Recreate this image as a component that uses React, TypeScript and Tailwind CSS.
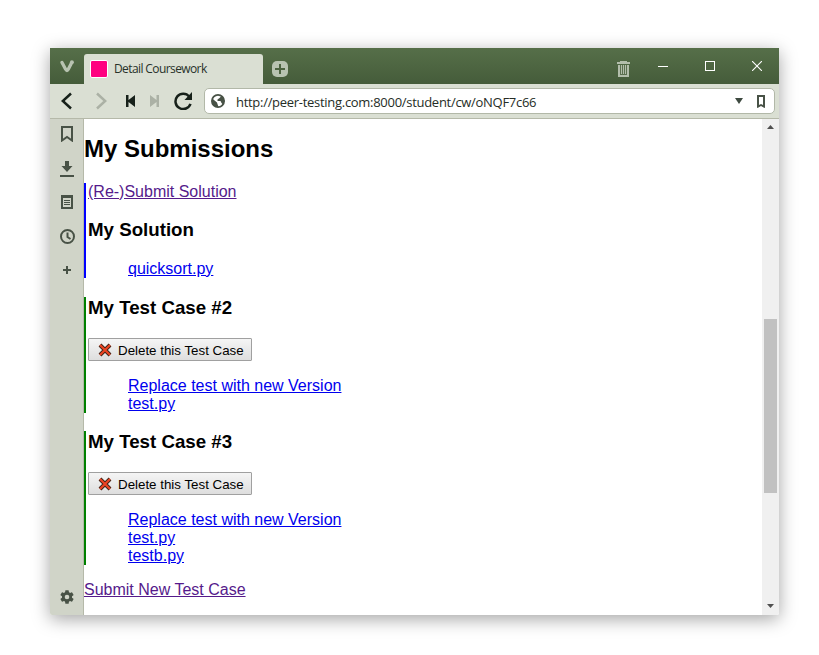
import type { ReactNode } from 'react';

function Glyph({ w, h, className = '', children }: { w: number; h: number; className?: string; children: ReactNode }) {
  return (
    <svg width={w} height={h} viewBox={`0 0 ${w} ${h}`} fill="none" className={`block shrink-0 ${className}`}>
      {children}
    </svg>
  );
}

function TitleBar() {
  return (
    <header className="flex h-9 shrink-0 items-start bg-linear-to-b from-[#566f49] to-[#455c3a]">
      <Glyph w={14} h={13} className="mt-3 ml-2.5">
        <path d="M2 2.500L5.600 9.300Q7 11.800 8.300 9.300L11 4" stroke="#b8c3b1" strokeWidth="3.300" strokeLinecap="round" strokeLinejoin="round" />
        <circle cx="11.900" cy="2.200" r="2" fill="#b8c3b1" />
      </Glyph>
      <div className="mt-1.5 ml-2.5 flex h-[30px] w-[179px] items-center rounded-t-[3px] bg-[#dadfd3] pl-1.5">
        <div className="h-[18px] w-[18px] rounded-[2px] border border-white bg-[#ff0080]" />
        <span className="ml-1.5 font-['Open_Sans',sans-serif] text-[12px] leading-4 tracking-[-0.6px] whitespace-nowrap text-[#27312a]">Detail Coursework</span>
      </div>
      <Glyph w={16} h={16} className="mt-[13px] ml-[9px]">
        <rect width="16" height="16" rx="5" fill="#b8c3b1" />
        <path d="M8 3v10M3 8h10" stroke="#4d6441" strokeWidth="2" />
      </Glyph>
      <Glyph w={13} h={16} className="mt-[13px] ml-auto">
        <path d="M0 1h3V0h7v1h3v2H0zM1 4h11v12H1z" fill="#b3beab" />
        <path d="M3.500 4v10M5.500 4v9M7.500 4v9M9.500 4v10M3 13.500h7" stroke="#5c7050" />
      </Glyph>
      <Glyph w={10} h={10} className="mt-[13px] ml-7">
        <path d="M0 5.500h10" stroke="white" />
      </Glyph>
      <Glyph w={10} h={10} className="mt-[13px] ml-[37px]">
        <rect x=".5" y=".5" width="9" height="9" stroke="white" />
      </Glyph>
      <Glyph w={10} h={10} className="mt-[13px] mr-[17px] ml-[37px]">
        <path d="M0 0L10 10M10 0L0 10" stroke="white" strokeWidth="1.100" />
      </Glyph>
    </header>
  );
}

function Toolbar() {
  return (
    <div className="flex h-[35px] shrink-0 items-center border-b border-[#b5b9a9] bg-[#dadfd3] pr-1 pl-[11px]">
      <Glyph w={12} h={18}>
        <path d="M10 1.500L1.800 9L10 16.500" stroke="#17211a" strokeWidth="2.500" />
      </Glyph>
      <Glyph w={12} h={18} className="ml-[22px]">
        <path d="M2 1.500L10.200 9L2 16.500" stroke="#abb1a5" strokeWidth="2.500" />
      </Glyph>
      <Glyph w={9} h={12} className="ml-[19px]">
        <path d="M0 0h2.500v5L9 0v12L2.500 7V12H0z" fill="#17211a" />
      </Glyph>
      <Glyph w={9} h={12} className="ml-[15px]">
        <path d="M9 0H6.500v5L0 0v12l6.500-5V12H9z" fill="#abb1a5" />
      </Glyph>
      <Glyph w={18} h={18} className="ml-[15px]">
        <path d="M15.200 4.500A7.700 7.700 0 1 0 16.500 11.800" stroke="#17211a" strokeWidth="2.500" />
        <path d="M18 0v8h-7.500z" fill="#17211a" />
      </Glyph>
      <div className="ml-[12px] flex h-[26px] flex-1 items-center rounded-[5px] border border-[#b2b8a8] bg-white pr-[9px] pl-1.5">
        <Glyph w={14} h={14}>
          <circle cx="7" cy="7" r="6.100" stroke="#485246" strokeWidth="1.800" />
          <path d="M1 4L3 6L6 8.500L6.500 10L7.500 13H5L1 10zM5 1h5v1.500L8.500 4 6.500 5.500V7H9.500L10.500 9L12 10.500L13.500 7L12 3L9 1z" fill="#485246" />
        </Glyph>
        <span className="mt-0.5 ml-[11px] flex-1 font-['Open_Sans',sans-serif] text-[13px] leading-5 tracking-[-0.29px] whitespace-nowrap text-[#252d26]">http://peer-testing.com:8000/student/cw/oNQF7c66</span>
        <Glyph w={8} h={6}>
          <path d="M0 0h8L4 6z" fill="#3e4a40" />
        </Glyph>
        <Glyph w={8} h={13} className="ml-[14px]">
          <path d="M0 0h8v13l-1.500-.5L4 11 1.500 12.500 0 13zM2 2v8l2-1 2 1V2z" fill="#485246" fillRule="evenodd" />
        </Glyph>
      </div>
    </div>
  );
}

function Sidebar() {
  return (
    <aside className="flex w-[34px] shrink-0 flex-col border-r border-[#b5b9a9] bg-[#d0d4c8] pt-[7px] pb-[11px]">
      <Glyph w={12} h={16} className="ml-[11px]">
        <path d="M1 1h10v13.500L6 11l-5 3.500z" stroke="#485246" strokeWidth="2" />
      </Glyph>
      <Glyph w={14} h={16} className="mt-[19px] ml-2.5">
        <path d="M5 0h4v5h3.500L7 11 1.500 5H5zM0 14h14v2H0z" fill="#485246" />
      </Glyph>
      <Glyph w={12} h={14} className="mt-[18px] ml-[11px]">
        <path d="M1 1.500h10V13H1z" stroke="#485246" strokeWidth="2" />
        <path d="M0 1.500h12" stroke="#485246" strokeWidth="3" />
        <path d="M3 5.500h6M3 7.500h6M3 9.500h6" stroke="#485246" />
      </Glyph>
      <Glyph w={15} h={15} className="mt-5 ml-2.5">
        <circle cx="7.500" cy="7.500" r="6.500" stroke="#485246" strokeWidth="2" />
        <path d="M7.500 3.500v4.500l3 2" stroke="#485246" strokeWidth="2" />
      </Glyph>
      <Glyph w={8} h={8} className="mt-[22px] ml-[13px]">
        <path d="M4 0v8M0 4h8" stroke="#485246" strokeWidth="2" />
      </Glyph>
      <svg width="14" height="14" viewBox="2.200 2 19.600 20" className="mt-auto ml-2.5 block" fill="#485246">
        <path d="M19.140 12.940c.04-.3.060-.61.060-.94s-.02-.64-.07-.94l2.030-1.580a.49.490 0 0 0 .12-.61l-1.920-3.320a.49.490 0 0 0-.59-.22l-2.390.96a7 7 0 0 0-1.620-.94l-.36-2.540A.48.480 0 0 0 13.920 2.400h-3.840a.48.480 0 0 0-.47.410l-.36 2.540c-.59.240-1.130.57-1.620.94l-2.390-.96a.48.480 0 0 0-.59.220L2.740 8.870a.48.480 0 0 0 .12.610l2.030 1.580a6 6 0 0 0 0 1.880l-2.030 1.580a.49.490 0 0 0-.12.610l1.920 3.320c.12.220.37.290.59.220l2.390-.96c.5.380 1.030.7 1.620.94l.36 2.540c.05.240.24.410.48.410h3.840c.24 0 .44-.17.470-.41l.36-2.540c.59-.24 1.130-.56 1.620-.94l2.390.96c.22.080.47 0 .59-.22l1.920-3.320a.48.480 0 0 0-.12-.61zM12 15.300a3.300 3.300 0 1 1 0-6.600 3.300 3.300 0 0 1 0 6.600z" />
      </svg>
    </aside>
  );
}

function Link({ visited = false, children }: { visited?: boolean; children: ReactNode }) {
  return (
    <a href="#" className={`block w-fit underline ${visited ? 'text-[#551a8b]' : 'text-[#0000ee]'}`}>
      {children}
    </a>
  );
}

function TestCase({ number, files }: { number: number; files: string[] }) {
  return (
    <section className="mb-[18px] border-l-2 border-[green] pl-0.5">
      <h3 className="h-[41px] text-[18.720px] leading-[21px] font-bold">My Test Case #{number}</h3>
      <button className="flex h-[23px] w-[164px] items-center rounded-[1px] border border-[#a0a0a0] bg-linear-to-b from-[#f5f5f5] to-[#dedede] pl-[9px] text-[13.333px] leading-4 whitespace-nowrap">
        <Glyph w={14} h={14} className="mt-px mr-1.5">
          <path d="M2 2L12 12M12 2L2 12" stroke="#3f2418" strokeWidth="4" />
          <path d="M2 2L12 12M12 2L2 12" stroke="#ee4423" strokeWidth="2.100" />
        </Glyph>
        <span className="mt-0.5">Delete this Test Case</span>
      </button>
      <div className="mt-4 pl-10">
        <Link>Replace test with new Version</Link>
        {files.map((file) => (
          <Link key={file}>{file}</Link>
        ))}
      </div>
    </section>
  );
}

function Page() {
  return (
    <main className="flex-1 overflow-hidden bg-white pt-4 font-['Liberation_Sans',Arial,sans-serif] text-[16px] leading-[18px] text-black">
      <h2 className="h-12 text-[24px] leading-[27px] font-bold">My Submissions</h2>
      <section className="mb-[19px] border-l-2 border-[#0000ff] pl-0.5">
        <Link visited>(Re-)Submit Solution</Link>
        <h3 className="mt-[18px] mb-[19px] text-[18.720px] leading-[21px] font-bold">My Solution</h3>
        <div className="h-[19px] pt-px pl-10">
          <Link>quicksort.py</Link>
        </div>
      </section>
      <TestCase number={2} files={['test.py']} />
      <TestCase number={3} files={['test.py', 'testb.py']} />
      <div className="-mt-0.5">
        <Link visited>Submit New Test Case</Link>
      </div>
    </main>
  );
}

function Scrollbar() {
  return (
    <div className="flex w-[17px] shrink-0 flex-col items-center bg-[#f0f0f0] pt-1.5 pb-[7px]">
      <Glyph w={7} h={4}>
        <path d="M0 4L3.500 0L7 4z" fill="#505050" />
      </Glyph>
      <div className="mt-[190px] h-[174px] w-[13px] bg-[#c1c1c1]" />
      <Glyph w={7} h={4} className="mt-auto">
        <path d="M0 0h7L3.500 4z" fill="#505050" />
      </Glyph>
    </div>
  );
}

export default function App() {
  return (
    <div className="h-[655px] w-[819px] overflow-hidden bg-white pt-12 pl-[50px]">
      <div className="flex h-[567px] w-[729px] flex-col overflow-hidden rounded-b-[2px] shadow-[0_4px_18px_rgba(0,0,0,0.36)]">
        <TitleBar />
        <Toolbar />
        <div className="flex min-h-0 flex-1">
          <Sidebar />
          <Page />
          <Scrollbar />
        </div>
      </div>
    </div>
  );
}
